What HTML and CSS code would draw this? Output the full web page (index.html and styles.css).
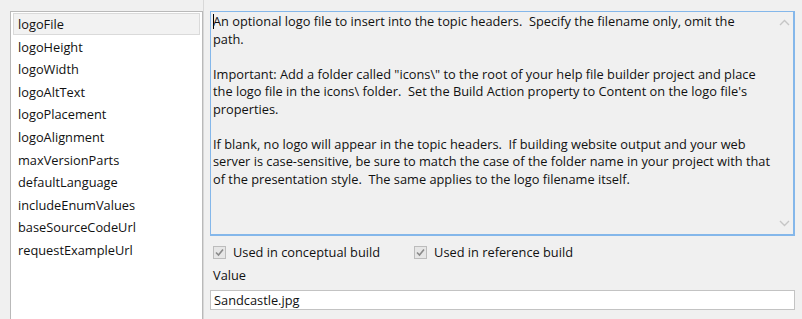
FILE: index.html
```html
<!DOCTYPE html>
<html>
<head>
<meta charset="utf-8">
<link rel="stylesheet" href="styles.css">
</head>
<body>
<div class="app">
  <div class="list">
    <div class="item selected">logoFile</div>
    <div class="item">logoHeight</div>
    <div class="item">logoWidth</div>
    <div class="item">logoAltText</div>
    <div class="item">logoPlacement</div>
    <div class="item">logoAlignment</div>
    <div class="item">maxVersionParts</div>
    <div class="item">defaultLanguage</div>
    <div class="item">includeEnumValues</div>
    <div class="item">baseSourceCodeUrl</div>
    <div class="item">requestExampleUrl</div>
  </div>
  <div class="splitter"></div>
  <div class="detail">
    <div class="desc">
      <div class="desc-text"><span class="caret"></span>An optional logo file to insert into the topic headers.  Specify the filename only, omit the
path.

Important: Add a folder called "icons\" to the root of your help file builder project and place
the logo file in the icons\ folder.  Set the Build Action property to Content on the logo file's
properties.

If blank, no logo will appear in the topic headers.  If building website output and your web
server is case-sensitive, be sure to match the case of the folder name in your project with that
of the presentation style.  The same applies to the logo filename itself.</div>
      <div class="scroll">
        <svg class="chev" width="11" height="7" viewBox="0 0 11 7"><polyline points="1,6 5.5,1.5 10,6" fill="none" stroke="#c6c6c6" stroke-width="1.4"/></svg>
        <svg class="chev" width="11" height="7" viewBox="0 0 11 7"><polyline points="1,1 5.5,5.5 10,1" fill="none" stroke="#c6c6c6" stroke-width="1.4"/></svg>
      </div>
    </div>
    <div class="checks">
      <label class="check"><span class="box"><svg width="11" height="11" viewBox="0 0 11 11"><polyline points="2,5.5 4.5,8 9,2.5" fill="none" stroke="#8a8a8a" stroke-width="1.6"/></svg></span>Used in conceptual build</label>
      <label class="check"><span class="box"><svg width="11" height="11" viewBox="0 0 11 11"><polyline points="2,5.5 4.5,8 9,2.5" fill="none" stroke="#8a8a8a" stroke-width="1.6"/></svg></span>Used in reference build</label>
    </div>
    <div class="value-label">Value</div>
    <div class="input">Sandcastle.jpg</div>
  </div>
</div>
</body>
</html>
```
FILE: styles.css
```css
html, body {
  margin: 0;
  padding: 0;
  background: #f0f0f0;
  overflow: hidden;
}
body {
  font-family: "Open Sans", "Noto Sans", sans-serif;
  font-size: 12.8px;
  color: #111;
  width: 802px;
  height: 319px;
}
.app {
  display: flex;
  align-items: flex-start;
  padding-left: 10px;
  height: 319px;
  overflow: hidden;
}
.list {
  width: 193px;
  height: 308px;
  margin-top: 11px;
  background: #fff;
  border: 1px solid #b9b9b9;
  border-bottom: none;
  padding: 1px 2px;
  box-sizing: border-box;
}
.item {
  height: 22.6px;
  line-height: 22.6px;
  padding-left: 5px;
  box-sizing: border-box;
  white-space: nowrap;
}
.item.selected {
  background: #f2f2f2;
  border: 1px solid #dadada;
  padding-left: 4px;
  line-height: 20px;
  height: 22px;
  margin-bottom: 0.6px;
}
.splitter {
  width: 1px;
  height: 319px;
  background: #d8d8d8;
  margin-right: 6px;
}
.detail {
  display: flex;
  flex-direction: column;
  width: 585px;
}
.desc {
  margin-top: 11px;
  height: 225px;
  box-sizing: border-box;
  border: 1px solid #84b7ea;
  border-right-width: 2px;
  border-bottom-width: 2px;
  display: flex;
  background: #f0f0f0;
}
.desc-text {
  flex: 1;
  white-space: pre;
  line-height: 17.55px;
  padding: 1px 0 0 2px;
  overflow: hidden;
}
.caret {
  display: inline-block;
  width: 1px;
  height: 15px;
  background: #000;
  margin-right: -1px;
  vertical-align: -3px;
}
.scroll {
  width: 17px;
  display: flex;
  flex-direction: column;
  justify-content: space-between;
  align-items: center;
  padding: 7px 0 7px;
}
.chev { display: block; }
.checks {
  display: flex;
  margin-top: 9px;
  height: 14px;
  align-items: center;
  padding-left: 3px;
}
.check {
  display: flex;
  align-items: center;
  margin-right: 34px;
}
.box {
  width: 13px;
  height: 13px;
  box-sizing: border-box;
  border: 1px solid #bcbcbc;
  background: #e6e6e6;
  margin-right: 7px;
  display: flex;
  align-items: center;
  justify-content: center;
}
.box svg { display: block; }
.value-label {
  margin-top: 8px;
  line-height: 17px;
  padding-left: 3px;
}
.input {
  margin-top: 6px;
  height: 20px;
  box-sizing: border-box;
  border: 1px solid #c3c3c3;
  background: #fff;
  line-height: 18px;
  padding-left: 3px;
  width: 585px;
}
```
